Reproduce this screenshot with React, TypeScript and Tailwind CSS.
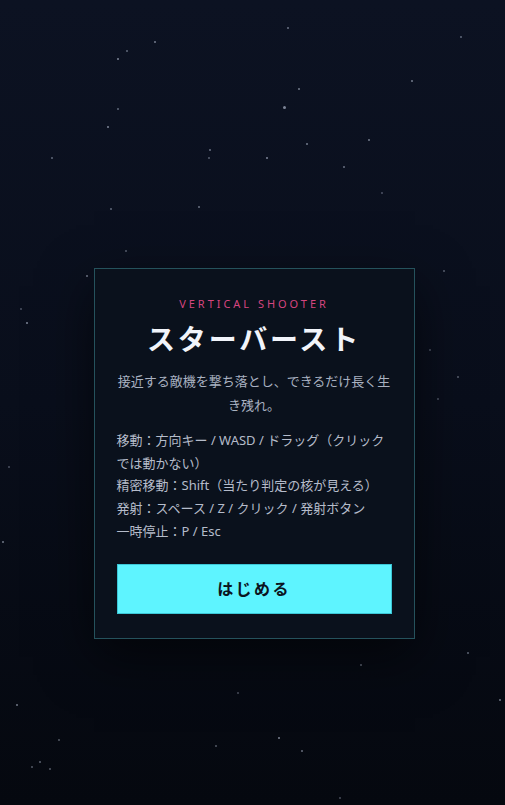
import React from "react";

// Star field: [x, y, size, opacity]
const STARS: [number, number, number, number][] = [
  [288, 28, 2, 0.5], [155, 42, 2, 0.55], [127, 51, 2, 0.45], [118, 59, 2, 0.6],
  [461, 37, 2, 0.45], [412, 81, 2, 0.55], [299, 89, 2, 0.55], [284, 107, 3, 0.6],
  [118, 109, 2, 0.45], [108, 127, 2.5, 0.6], [52, 158, 2, 0.45], [210, 150, 2, 0.5],
  [209, 158, 2, 0.4], [267, 158, 2.5, 0.6], [307, 144, 2.5, 0.55], [369, 140, 2.5, 0.55],
  [344, 167, 2, 0.5], [382, 193, 2, 0.35], [111, 209, 2, 0.45], [199, 207, 2, 0.5],
  [126, 251, 2, 0.4], [87, 276, 2.5, 0.55], [21, 309, 2, 0.35], [27, 323, 2.5, 0.6],
  [9, 467, 2, 0.35], [3, 542, 2.5, 0.55], [444, 271, 2, 0.4], [430, 350, 2, 0.35],
  [458, 377, 2, 0.4], [438, 399, 2, 0.35], [468, 653, 2, 0.45], [361, 665, 2, 0.45],
  [238, 693, 2, 0.35], [500, 700, 2.5, 0.55], [17, 705, 2.5, 0.55], [59, 740, 2, 0.4],
  [279, 738, 2.5, 0.6], [216, 746, 2, 0.4], [302, 751, 2, 0.5], [40, 762, 2, 0.45],
  [32, 767, 2, 0.4], [50, 769, 2, 0.4], [340, 798, 2, 0.35],
];

const CONTROLS = [
  "移動：方向キー / WASD / ドラッグ（クリックでは動かない）",
  "精密移動：Shift（当たり判定の核が見える）",
  "発射：スペース / Z / クリック / 発射ボタン",
  "一時停止：P / Esc",
];

export default function App() {
  return (
    <div
      className="relative min-h-[805px] w-full overflow-hidden bg-gradient-to-b from-[#0c1222] via-[#090e1b] to-[#05080f]"
      style={{ fontFamily: '"Noto Sans", "Noto Sans CJK JP", sans-serif' }}
    >
      {/* background stars */}
      <div className="pointer-events-none absolute inset-0">
        {STARS.map(([x, y, s, o], i) => (
          <span
            key={i}
            className="absolute rounded-full bg-[#c8d2e6]"
            style={{ left: x - s / 2, top: y - s / 2, width: s, height: s, opacity: o }}
          />
        ))}
      </div>

      <div className="relative flex flex-col items-center pl-[3px] pt-[268px]">
        <div className="w-[321px] border border-[#25525c] bg-[#0a111c] px-[22px] pb-[24px] pt-[27px] shadow-[0_18px_50px_rgba(0,0,0,0.55)]">
          <div className="text-center text-[11px] leading-[16px] tracking-[0.27em] text-[#d6457f]">
            VERTICAL SHOOTER
          </div>
          <h1 className="mt-[9px] text-center text-[28px] font-bold leading-[36px] tracking-[0.1em] text-[#f1f4fa]">
            スターバースト
          </h1>
          <p className="mt-[12px] text-center text-[13px] leading-[24px] text-[#a9b1c1]">
            接近する敵機を撃ち落とし、できるだけ長く生き残れ。
          </p>
          <div className="mt-[12px] text-[13px] leading-[22.7px] text-[#b5bcca]">
            {CONTROLS.map((c) => (
              <div key={c}>{c}</div>
            ))}
          </div>
          <button className="mt-[21px] flex h-[50px] w-full items-center justify-center border border-[#3cc6d6] bg-[#5ef4ff] text-[16px] font-bold tracking-[0.15em] text-[#0b1420]">
            はじめる
          </button>
        </div>
      </div>
    </div>
  );
}
